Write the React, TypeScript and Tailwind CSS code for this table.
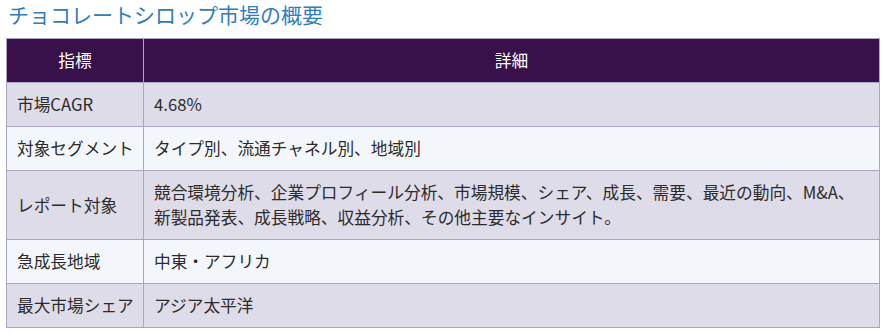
const rows = [
  { label: "市場CAGR", value: "4.68%" },
  { label: "対象セグメント", value: "タイプ別、流通チャネル別、地域別" },
  {
    label: "レポート対象",
    value:
      "競合環境分析、企業プロフィール分析、市場規模、シェア、成長、需要、最近の動向、M&A、新製品発表、成長戦略、収益分析、その他主要なインサイト。",
  },
  { label: "急成長地域", value: "中東・アフリカ" },
  { label: "最大市場シェア", value: "アジア太平洋" },
];

const App = () => {
  return (
    <div
      className="w-[886px] h-[334px] bg-white px-[6px] overflow-hidden"
      style={{ fontFamily: '"Noto Sans CJK JP", "Noto Sans", sans-serif' }}
    >
      <h2 className="text-[21px] leading-[28px] text-[#2f7dbb] pl-[2px] mb-[10px] font-normal">
        チョコレートシロップ市場の概要
      </h2>
      <table className="w-[874px] border-collapse border border-[#aba5c3] text-[16.7px] leading-[25px] text-[#2b2b2b]">
        <thead>
          <tr className="bg-[#38104a] text-white">
            <th className="w-[137px] border border-[#aba5c3] py-[9px] font-normal text-center">
              指標
            </th>
            <th className="border border-[#aba5c3] py-[9px] font-normal text-center">
              詳細
            </th>
          </tr>
        </thead>
        <tbody>
          {rows.map((row, i) => (
            <tr
              key={row.label}
              className={i % 2 === 0 ? "bg-[#dfdcea]" : "bg-[#f3f7fb]"}
            >
              <td className="border border-[#aba5c3] pl-[10px] pr-[4px] py-[9px] whitespace-nowrap">
                {row.label}
              </td>
              <td className="border border-[#aba5c3] px-[10px] py-[9px]">
                {row.value}
              </td>
            </tr>
          ))}
        </tbody>
      </table>
    </div>
  );
};

export default App;
